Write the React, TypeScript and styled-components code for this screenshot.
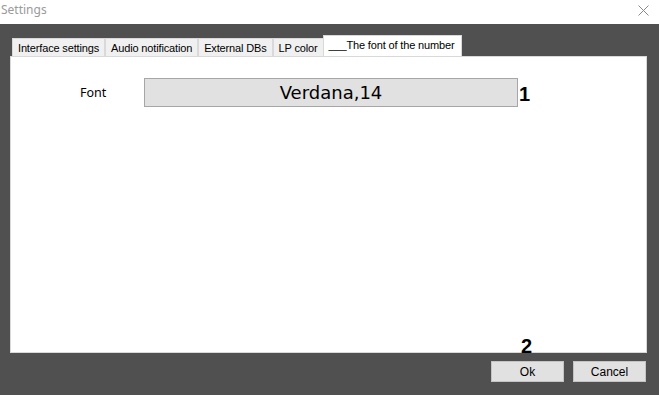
import React from "react";
import styled, { createGlobalStyle } from "styled-components";

const Global = createGlobalStyle`
  html, body { margin: 0; padding: 0; }
  body {
    width: 659px;
    height: 395px;
    overflow: hidden;
    background: #505050;
    font-family: "Liberation Sans", Arial, sans-serif;
  }
`;

const Window = styled.div`
  width: 659px;
  height: 395px;
  display: flex;
  flex-direction: column;
  background: #505050;
`;

const TitleBar = styled.div`
  height: 24px;
  background: #ffffff;
  display: flex;
  align-items: center;
  justify-content: space-between;
  padding: 0 10px 0 1px;
  box-sizing: border-box;
`;

const Title = styled.span`
  font-family: "Noto Sans", "Open Sans", sans-serif;
  font-size: 12px;
  color: #9a9a9a;
  margin-top: -6px;
`;

const Close = styled.svg`
  width: 11px;
  height: 11px;
  margin-top: -4px;
`;

const Body = styled.div`
  flex: 1;
  display: flex;
  flex-direction: column;
  padding: 11px 12px 0 10px;
`;

const TabStrip = styled.div`
  display: flex;
  align-items: flex-end;
  height: 21px;
  padding-left: 2px;
`;

const Tab = styled.div<{ $active?: boolean }>`
  height: ${(p) => (p.$active ? "21px" : "18px")};
  box-sizing: border-box;
  padding: 0 ${(p) => (p.$active ? "7px" : "5px")} 0 5px;
  display: flex;
  align-items: center;
  font-size: 11px;
  letter-spacing: -0.15px;
  color: #000;
  background: ${(p) => (p.$active ? "#ffffff" : "#f0f0f0")};
  border: 1px solid #d9d9d9;
  border-bottom: none;
  margin-left: ${(p) => (p.$active ? "-1px" : "0")};
  & + & { border-left: ${(p) => (p.$active ? "1px solid #d9d9d9" : "none")}; }
  padding-bottom: ${(p) => (p.$active ? "2px" : "0")};
`;

const Panel = styled.div`
  width: 637px;
  height: 297px;
  box-sizing: border-box;
  background: #ffffff;
  border: 1px solid #d9d9d9;
  position: relative;
`;

const FontRow = styled.div`
  display: flex;
  align-items: center;
  padding: 21px 0 0 69px;
`;

const Label = styled.span`
  font-family: "Noto Sans", "Open Sans", sans-serif;
  font-size: 12.5px;
  color: #000;
  width: 64px;
`;

const FontBox = styled.div`
  width: 374px;
  height: 29px;
  box-sizing: border-box;
  background: #e1e1e1;
  border: 1px solid #a6a6a6;
  display: flex;
  align-items: center;
  justify-content: center;
  font-family: "DejaVu Sans", Verdana, sans-serif;
  font-size: 18px;
  color: #000;
`;

const Marker = styled.span`
  font-family: "Liberation Sans", Arial, sans-serif;
  font-weight: bold;
  font-size: 20px;
  color: #000;
  line-height: 1;
`;

const MarkerOne = styled(Marker)`
  margin-left: 1px;
  margin-top: 2px;
`;

const Footer = styled.div`
  display: flex;
  justify-content: flex-end;
  gap: 9px;
  padding: 8px 1px 0 0;
`;

const ButtonWrap = styled.div`
  position: relative;
`;

const MarkerTwo = styled(Marker)`
  position: absolute;
  left: 30px;
  top: -25px;
`;

const Button = styled.button`
  width: 73px;
  height: 21px;
  box-sizing: border-box;
  background: #e1e1e1;
  border: 1px solid #c4c4c4;
  font-family: "Liberation Sans", Arial, sans-serif;
  font-size: 12px;
  color: #000;
  padding: 0;
  display: flex;
  align-items: center;
  justify-content: center;
`;

export default function App() {
  return (
    <Window>
      <Global />
      <TitleBar>
        <Title>Settings</Title>
        <Close viewBox="0 0 11 11">
          <path d="M0.5 0.5 L10.5 10.5 M10.5 0.5 L0.5 10.5" stroke="#8a8a8a" strokeWidth="1" fill="none" />
        </Close>
      </TitleBar>
      <Body>
        <TabStrip>
          <Tab>Interface settings</Tab>
          <Tab>Audio notification</Tab>
          <Tab>External DBs</Tab>
          <Tab>LP color</Tab>
          <Tab $active>___The font of the number</Tab>
        </TabStrip>
        <Panel>
          <FontRow>
            <Label>Font</Label>
            <FontBox>Verdana,14</FontBox>
            <MarkerOne>1</MarkerOne>
          </FontRow>
        </Panel>
        <Footer>
          <ButtonWrap>
            <MarkerTwo>2</MarkerTwo>
            <Button>Ok</Button>
          </ButtonWrap>
          <Button>Cancel</Button>
        </Footer>
      </Body>
    </Window>
  );
}
